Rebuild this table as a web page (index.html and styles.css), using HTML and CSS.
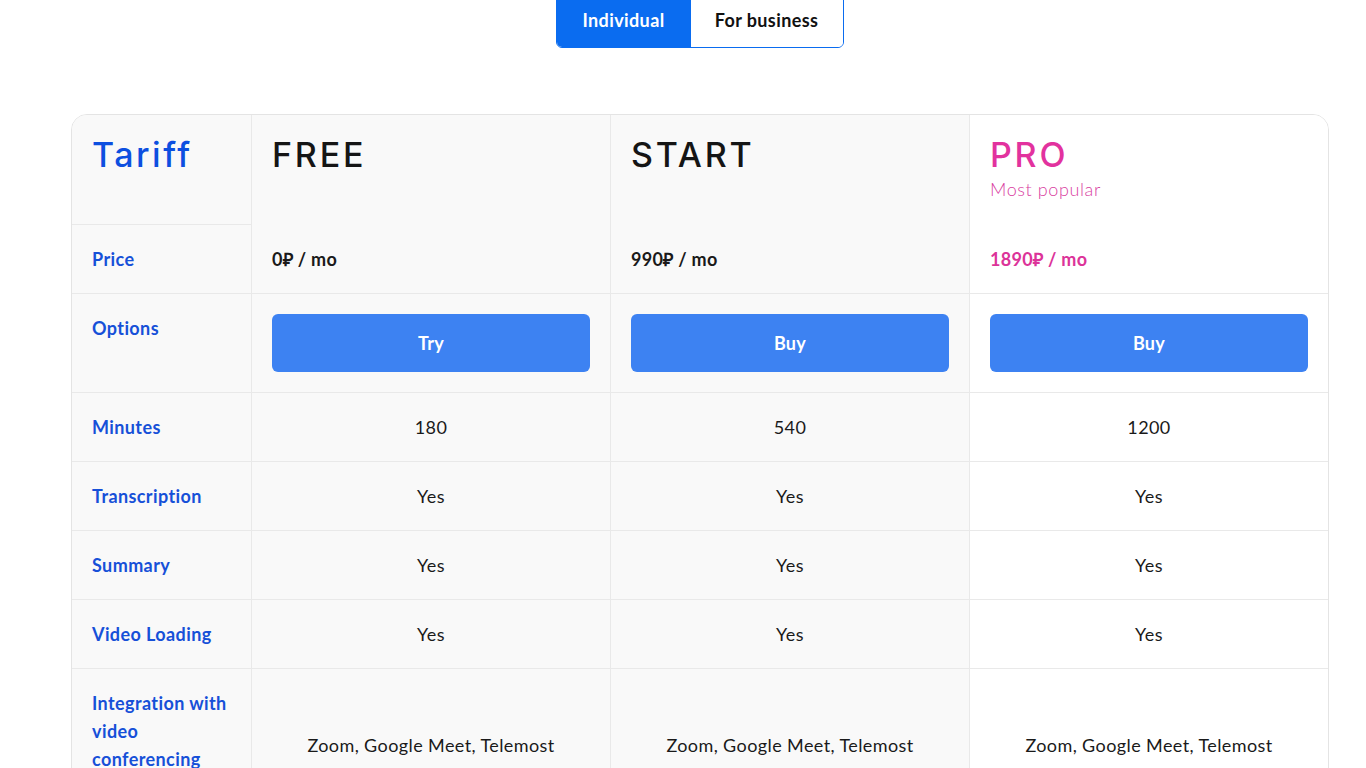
FILE: index.html
```html
<!DOCTYPE html>
<html>
<head>
  <meta charset="utf-8">
  <title>Tariffs</title>
  <link rel="stylesheet" href="styles.css">
</head>
<body>
  <div class="page">
    <div class="switch">
      <button class="switch-btn active">Individual</button>
      <button class="switch-btn">For business</button>
    </div>

    <div class="tariffs">
      <div class="cell label head-label">Tariff</div>
      <div class="cell plan gray">
        <div class="plan-title">FREE</div>
        <div class="price">0₽ / mo</div>
      </div>
      <div class="cell plan gray">
        <div class="plan-title">START</div>
        <div class="price">990₽ / mo</div>
      </div>
      <div class="cell plan pro last">
        <div>
          <div class="plan-title">PRO</div>
          <div class="popular">Most popular</div>
        </div>
        <div class="price">1890₽ / mo</div>
      </div>
      <div class="cell label">Price</div>

      <div class="cell label">Options</div>
      <div class="cell gray"><button class="buy">Try</button></div>
      <div class="cell gray"><button class="buy">Buy</button></div>
      <div class="cell last"><button class="buy">Buy</button></div>

      <div class="cell label">Minutes</div>
      <div class="cell gray val">180</div>
      <div class="cell gray val">540</div>
      <div class="cell last val">1200</div>

      <div class="cell label">Transcription</div>
      <div class="cell gray val">Yes</div>
      <div class="cell gray val">Yes</div>
      <div class="cell last val">Yes</div>

      <div class="cell label">Summary</div>
      <div class="cell gray val">Yes</div>
      <div class="cell gray val">Yes</div>
      <div class="cell last val">Yes</div>

      <div class="cell label">Video Loading</div>
      <div class="cell gray val">Yes</div>
      <div class="cell gray val">Yes</div>
      <div class="cell last val">Yes</div>

      <div class="cell label">Integration with video conferencing services</div>
      <div class="cell gray val">Zoom, Google Meet, Telemost</div>
      <div class="cell gray val">Zoom, Google Meet, Telemost</div>
      <div class="cell last val">Zoom, Google Meet, Telemost</div>
    </div>
  </div>
</body>
</html>
```

FILE: styles.css
```css
*{margin: 0;padding: 0;box-sizing: border-box;}
html, body{
  background-color: #ffffff;
  color: #1a1a1a;
  font-family: "Lato", "Open Sans", sans-serif;
}
.page{
  padding: 0 37px 40px 71px;
  display: flex;
  flex-direction: column;
  align-items: center;
}
.switch{
  display: flex;
  margin-top: -8px;
  margin-left: -1px;
  height: 56px;
  border: 1px solid #0a6cf0;
  border-radius: 6px;
  overflow: hidden;
}
.switch-btn{
  border: none;
  background: #ffffff;
  color: #111111;
  font-family: "Lato", sans-serif;
  font-size: 18px;
  font-weight: 700;
  letter-spacing: 0.4px;
  cursor: pointer;
}
.switch-btn.active{
  background: #0a6cf0;
  color: #ffffff;
  width: 134px;
}
.switch-btn + .switch-btn{
  width: 152px;
}
.tariffs{
  margin-top: 66px;
  width: 1258px;
  display: grid;
  grid-template-columns: 180px 359px 359px 1fr;
  border: 1px solid #e4e4e4;
  border-radius: 16px;
  overflow: hidden;
}
.cell{
  padding: 20px;
  font-size: 18px;
  line-height: 28px;
  border-bottom: 1px solid #e9e9e9;
  border-right: 1px solid #e9e9e9;
  background: #ffffff;
}
.cell.last{
  border-right: none;
}
.gray{
  background: #f9f9f9;
}
.label{
  background: #f9f9f9;
  color: #1650d8;
  font-weight: 700;
  letter-spacing: 0.4px;
}
.head-label{
  font-family: "Inter", sans-serif;
  font-size: 34px;
  line-height: 40px;
  font-weight: 500;
  min-height: 110px;
  color: #0d4fe0;
  letter-spacing: 2.5px;
}
.plan{
  display: flex;
  flex-direction: column;
  justify-content: space-between;
}
.tariffs > .plan:nth-child(2){ grid-column: 2; grid-row: 1 / 3; }
.tariffs > .plan:nth-child(3){ grid-column: 3; grid-row: 1 / 3; }
.tariffs > .plan:nth-child(4){ grid-column: 4; grid-row: 1 / 3; }
.tariffs > .label:nth-child(5){ grid-column: 1; grid-row: 2; }
.plan-title{
  font-family: "Inter", sans-serif;
  font-size: 34px;
  line-height: 40px;
  font-weight: 500;
  letter-spacing: 2.8px;
  color: #151515;
}
.pro .plan-title{
  color: #e2329e;
}
.popular{
  color: #d9409f;
  font-weight: 300;
  letter-spacing: 0.6px;
}
.price{
  font-weight: 700;
  letter-spacing: 0.3px;
}
.pro .price{
  color: #dc3399;
}
.buy{
  display: block;
  width: 100%;
  height: 58px;
  border: none;
  border-radius: 6px;
  background: #3d82f2;
  color: #ffffff;
  font-family: "Lato", sans-serif;
  font-size: 18px;
  font-weight: 700;
  letter-spacing: 0.3px;
  cursor: pointer;
}
.val{
  text-align: center;
  font-weight: 400;
  letter-spacing: 0.4px;
  display: flex;
  align-items: center;
  justify-content: center;
}
```
